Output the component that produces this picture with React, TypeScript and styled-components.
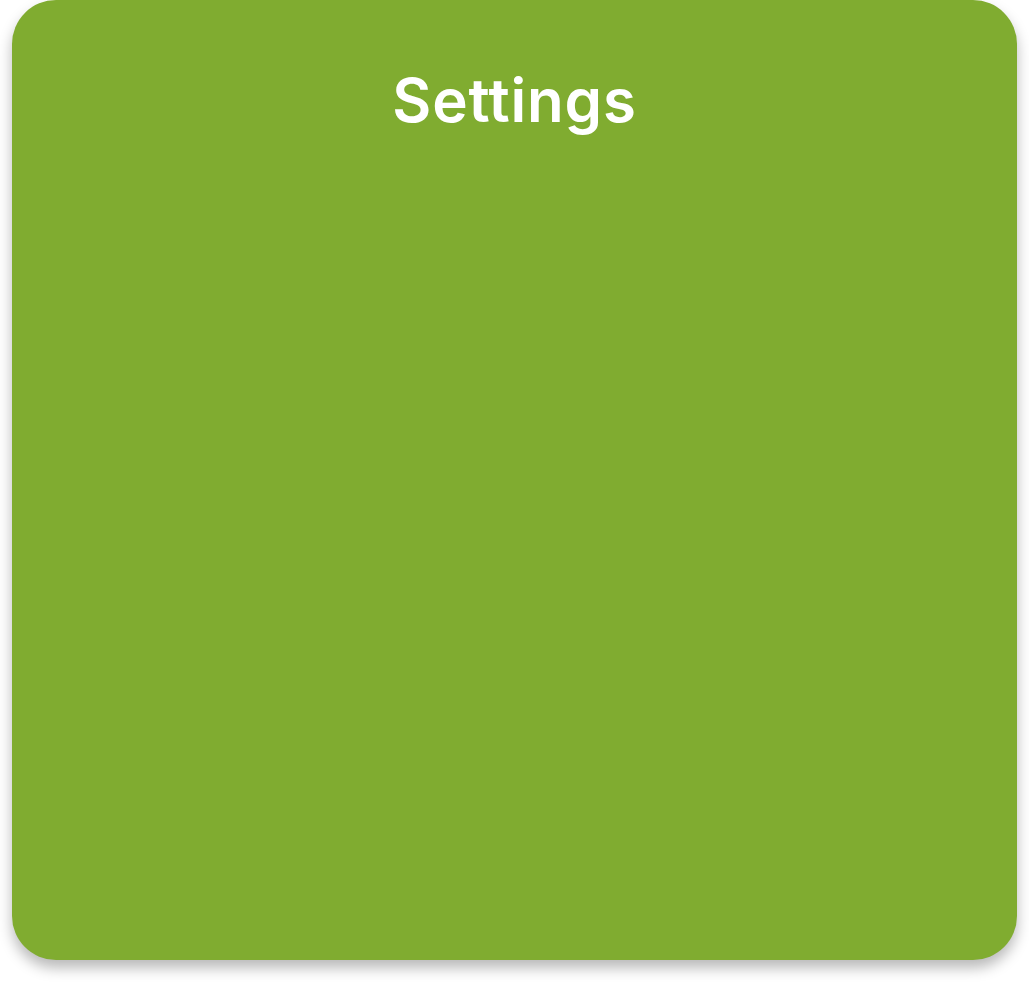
import React from "react";
import styled, { createGlobalStyle } from "styled-components";

const Global = createGlobalStyle`
  html, body { margin: 0; padding: 0; background: #ffffff; }
  body { font-family: Inter, "Noto Sans", sans-serif; }
`;

const Page = styled.div`
  padding: 0 12px 24px 12px;
`;

const Card = styled.section`
  height: 960px;
  background: #80ac30;
  border-radius: 44px;
  box-shadow: 0 8px 14px rgba(0, 0, 0, 0.28);
  display: flex;
  flex-direction: column;
  align-items: center;
`;

const Title = styled.h1`
  margin: 65px 0 0 0;
  font-family: Inter, "Noto Sans", sans-serif;
  font-weight: 600;
  font-size: 60px;
  line-height: 70px;
  color: #ffffff;
  letter-spacing: 0.8px;
`;

export default function App() {
  return (
    <>
      <Global />
      <Page>
        <Card>
          <Title>Settings</Title>
        </Card>
      </Page>
    </>
  );
}
